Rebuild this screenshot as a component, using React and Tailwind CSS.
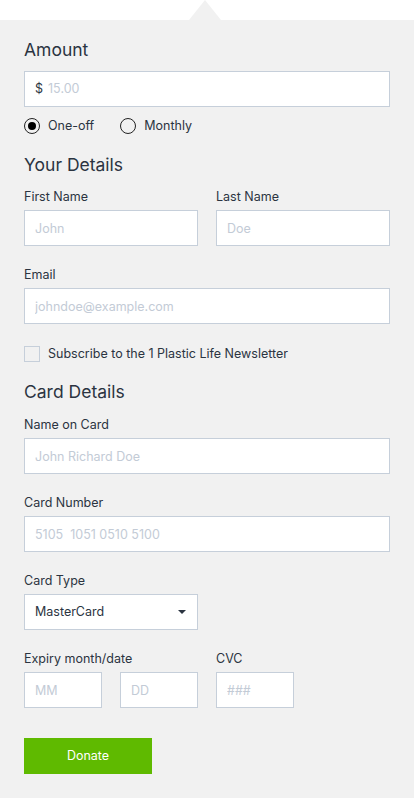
import React from "react";

function Field({ label, placeholder, className = "" }) {
    return (
        <div className={className}>
            <label className="block h-[17px] pt-px text-[12.5px] leading-4 text-[#2b3441] mb-[5px]">{label}</label>
            <input
                placeholder={placeholder}
                className="block w-full h-[36px] border border-[#c6cfda] bg-white px-[10px] text-[12.5px] text-[#2b3441] placeholder:text-[#c3cbd6] outline-none"
            />
        </div>
    );
}

function SmallInput({ placeholder }) {
    return (
        <input
            placeholder={placeholder}
            className="block w-[78px] h-[36px] border border-[#c6cfda] bg-white px-[10px] text-[12.5px] placeholder:text-[#c3cbd6] outline-none"
        />
    );
}

function Radio({ label, checked }) {
    return (
        <label className="flex items-center h-4 gap-2 text-[12.5px] text-[#2b3441]">
            <span className="w-4 h-4 rounded-full border-[1.5px] border-[#222] flex items-center justify-center">
                {checked && <span className="w-2 h-2 rounded-full bg-black"></span>}
            </span>
            <span className="pt-px">{label}</span>
        </label>
    );
}

export default function App() {
    return (
        <div className="w-[414px] min-h-[798px] bg-[#f1f1f1] font-['Inter',sans-serif] antialiased">
            <div className="h-5 bg-white flex">
                <svg width="32" height="20" viewBox="0 0 32 20" className="ml-[189px]">
                    <polygon points="16,0 32,20 0,20" fill="#f1f1f1" />
                </svg>
            </div>
            <div className="px-6 pt-[17px] pb-6">
                <h2 className="h-[25px] pt-px text-[17.5px] leading-6 text-[#2b3441]">Amount</h2>
                <div className="mt-[9px] h-[36px] border border-[#c6cfda] bg-white flex items-center px-[10px] text-[12.5px]">
                    <span className="text-[#2b3441] mr-[5px]">$</span>
                    <input placeholder="15.00" className="flex-1 outline-none bg-transparent placeholder:text-[#c3cbd6]" />
                </div>
                <div className="flex gap-[26px] mt-[11px]">
                    <Radio label="One-off" checked />
                    <Radio label="Monthly" />
                </div>

                <h2 className="h-[25px] pt-px text-[17.5px] leading-6 text-[#2b3441] mt-[18px]">Your Details</h2>
                <div className="grid grid-cols-2 gap-[18px] mt-[11px]">
                    <Field label="First Name" placeholder="John" />
                    <Field label="Last Name" placeholder="Doe" />
                </div>
                <Field label="Email" placeholder="johndoe@example.com" className="mt-[20px]" />
                <label className="flex items-center h-4 gap-2 mt-[22px] text-[12.5px] text-[#2b3441]">
                    <span className="w-4 h-4 border border-[#c6cfda] bg-[#f1f1f1]"></span>
                    <span className="pt-px">Subscribe to the 1 Plastic Life Newsletter</span>
                </label>

                <h2 className="h-[25px] pt-px text-[17.5px] leading-6 text-[#2b3441] mt-[17px]">Card Details</h2>
                <Field label="Name on Card" placeholder="John Richard Doe" className="mt-[12px]" />
                <Field label="Card Number" placeholder="5105  1051 0510 5100" className="mt-[20px]" />
                <div className="mt-[20px]">
                    <label className="block h-[17px] pt-px text-[12.5px] leading-4 text-[#2b3441] mb-[5px]">Card Type</label>
                    <div className="w-[174px] h-[36px] border border-[#c6cfda] bg-white flex items-center justify-between px-[10px] text-[12.5px] text-[#2b3441]">
                        MasterCard
                        <svg width="8" height="4" viewBox="0 0 8 4" className="mr-[1px]">
                            <polygon points="0,0 8,0 4,4" fill="#2b3441" />
                        </svg>
                    </div>
                </div>
                <div className="flex gap-[18px] mt-[20px]">
                    <div>
                        <label className="block h-[17px] pt-px text-[12.5px] leading-4 text-[#2b3441] mb-[5px]">Expiry month/date</label>
                        <div className="flex gap-[18px]">
                            <SmallInput placeholder="MM" />
                            <SmallInput placeholder="DD" />
                        </div>
                    </div>
                    <div>
                        <label className="block h-[17px] pt-px text-[12.5px] leading-4 text-[#2b3441] mb-[5px]">CVC</label>
                        <SmallInput placeholder="###" />
                    </div>
                </div>
                <button className="block mt-[30px] w-[128px] h-[36px] bg-[#5fba00] text-white text-[12.5px]">Donate</button>
            </div>
        </div>
    );
}
